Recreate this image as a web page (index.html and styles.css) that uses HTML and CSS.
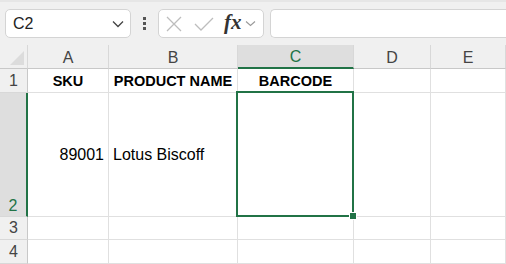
FILE: index.html
```html
<!DOCTYPE html>
<html lang="en">
<head>
  <meta charset="UTF-8">
  <title>Sheet</title>
  <link rel="stylesheet" href="styles.css">
</head>
<body>
  <!-- Formula toolbar -->
  <div class="toolbar">
    <div class="namebox">
      <span>C2</span>
      <svg class="chev" width="12" height="8" viewBox="0 0 12 8"><path d="M1 1.5 L6 6.5 L11 1.5" fill="none" stroke="#444" stroke-width="1.3"/></svg>
    </div>
    <div class="dots"><i></i><i></i><i></i></div>
    <div class="fxbox">
      <svg width="16" height="16" viewBox="0 0 16 16"><path d="M1 1 L15 15 M15 1 L1 15" stroke="#bdbdbd" stroke-width="1.3"/></svg>
      <svg width="20" height="16" viewBox="0 0 20 16"><path d="M1 8 L7 14 L19 2" fill="none" stroke="#bdbdbd" stroke-width="1.3"/></svg>
      <span class="fx">fx</span>
      <svg width="11" height="7" viewBox="0 0 11 7"><path d="M1 1.5 L5.5 5.5 L10 1.5" fill="none" stroke="#999" stroke-width="1.1"/></svg>
    </div>
    <div class="formula"></div>
  </div>

  <!-- Grid -->
  <div class="grid">
    <div class="corner"></div>
    <div class="colhead">A</div>
    <div class="colhead">B</div>
    <div class="colhead active">C</div>
    <div class="colhead">D</div>
    <div class="colhead">E</div>

    <div class="rowhead">1</div>
    <div class="cell bold center">SKU</div>
    <div class="cell bold center">PRODUCT NAME</div>
    <div class="cell bold center">BARCODE</div>
    <div class="cell"></div>
    <div class="cell"></div>

    <div class="rowhead active">2</div>
    <div class="cell right">89001</div>
    <div class="cell">Lotus Biscoff</div>
    <div class="cell selected"><span class="handle"></span></div>
    <div class="cell"></div>
    <div class="cell"></div>

    <div class="rowhead">3</div>
    <div class="cell"></div>
    <div class="cell"></div>
    <div class="cell"></div>
    <div class="cell"></div>
    <div class="cell"></div>

    <div class="rowhead">4</div>
    <div class="cell"></div>
    <div class="cell"></div>
    <div class="cell"></div>
    <div class="cell"></div>
    <div class="cell"></div>
  </div>
</body>
</html>
```

FILE: styles.css
```css
* {
  margin: 0;
  padding: 0;
  box-sizing: border-box;
}

body {
  font-family: 'Liberation Sans', Arial, sans-serif;
  background: #fff;
  width: 506px;
  height: 264px;
  overflow: hidden;
}

/* Toolbar */
.toolbar {
  height: 45px;
  background: #f0f0f0;
  border-top: 2px solid #e6e6e6;
  display: flex;
  align-items: center;
  padding: 0 0 0 5px;
}

.namebox {
  width: 126px;
  height: 29px;
  background: #fff;
  border: 1px solid #d4d4d4;
  border-radius: 5px;
  display: flex;
  align-items: center;
  justify-content: space-between;
  padding: 0 6px 0 7px;
  font-size: 16px;
  color: #222;
}

.dots {
  width: 27px;
  display: flex;
  flex-direction: column;
  align-items: center;
  gap: 2px;
}

.dots i {
  width: 3px;
  height: 3px;
  background: #555;
}

.fxbox {
  width: 106px;
  height: 29px;
  background: #fff;
  border: 1px solid #d4d4d4;
  border-radius: 5px;
  display: flex;
  align-items: center;
  padding: 0 3px 0 7px;
}

.fxbox svg:first-child {
  margin-right: 12px;
}

.fxbox svg:nth-child(2) {
  margin-right: 10px;
}

.fx {
  font-family: 'Liberation Serif', serif;
  font-style: italic;
  font-weight: bold;
  font-size: 21px;
  color: #333;
  margin-right: 3px;
  margin-top: -3px;
}

.formula {
  flex: 1;
  height: 29px;
  margin-left: 6px;
  background: #fff;
  border: 1px solid #d4d4d4;
  border-right: none;
  border-radius: 5px 0 0 5px;
}

/* Grid */
.grid {
  display: grid;
  grid-template-columns: 28px 81px 129px 116px 77px 75px;
  grid-template-rows: 24px 24px 124px 23px 24px;
}

.corner,
.colhead,
.rowhead {
  background: #f0f0f0;
  color: #444;
  font-size: 16px;
  display: flex;
  align-items: center;
  justify-content: center;
}

.corner {
  position: relative;
  border-right: 1px solid #d8d8d8;
  border-bottom: 1px solid #c8c8c8;
}

.corner::after {
  content: "";
  position: absolute;
  right: 3px;
  bottom: 3px;
  border-left: 14px solid transparent;
  border-bottom: 14px solid #dcdcdc;
}

.colhead {
  border-right: 1px solid #d8d8d8;
  border-bottom: 1px solid #c8c8c8;
  padding-top: 2px;
}

.colhead.active {
  background: #dedede;
  color: #217346;
  border-bottom: 2px solid #217346;
}

.rowhead {
  border-right: 1px solid #c8c8c8;
  border-bottom: 1px solid #d8d8d8;
}

.rowhead.active {
  background: #dedede;
  color: #217346;
  border-right: 2px solid #217346;
  align-items: flex-end;
  padding-bottom: 1px;
}

.cell {
  border-right: 1px solid #e0e0e0;
  border-bottom: 1px solid #e0e0e0;
  font-size: 16px;
  color: #000;
  display: flex;
  align-items: center;
  padding: 0 4px;
}

.bold {
  font-weight: bold;
  font-size: 14.5px;
}

.center {
  justify-content: center;
}

.right {
  justify-content: flex-end;
}

.selected {
  position: relative;
}

.selected::before {
  content: "";
  position: absolute;
  left: -2px;
  top: -2px;
  right: -1px;
  bottom: -1px;
  border: 2px solid #217346;
}

.handle {
  position: absolute;
  right: -4px;
  bottom: -4px;
  width: 6px;
  height: 6px;
  background: #217346;
  border: 1px solid #fff;
  box-sizing: content-box;
}
```
